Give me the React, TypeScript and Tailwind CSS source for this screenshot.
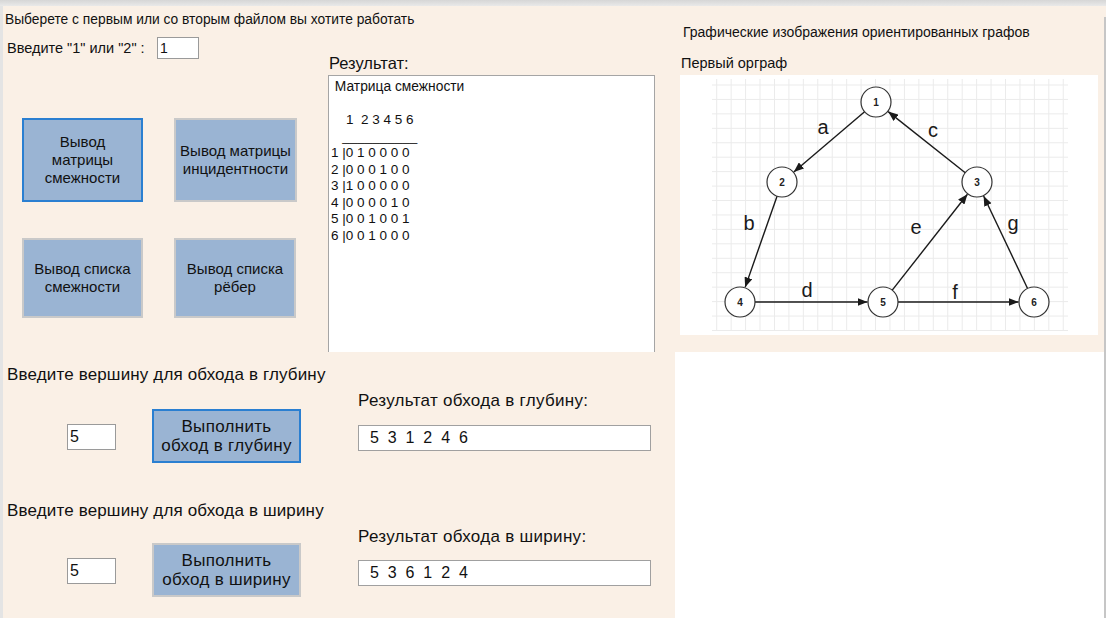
import React from "react";

const nodes: Record<string, [number, number]> = {
  "1": [196, 27],
  "2": [102, 107],
  "3": [297, 107],
  "4": [60, 227],
  "5": [203, 227],
  "6": [354, 227],
};

const edges: [string, string][] = [
  ["1", "2"],
  ["2", "4"],
  ["3", "1"],
  ["4", "5"],
  ["5", "3"],
  ["5", "6"],
  ["6", "3"],
];

const labels: [string, number, number][] = [
  ["a", 143, 52],
  ["c", 253, 55],
  ["b", 69, 148],
  ["e", 236, 152],
  ["g", 333, 148],
  ["d", 127, 215],
  ["f", 275, 217],
];

const R = 15;

function Graph() {
  const vx = Array.from({ length: 25 }, (_, i) => 36.7 + i * 14.44);
  const hy = Array.from({ length: 18 }, (_, i) => 10 + i * 14.44);
  return (
    <svg width="418" height="260" viewBox="0 0 418 260" className="block bg-white">
      <defs>
        <marker id="arr" markerWidth="10" markerHeight="8" refX="10" refY="4" orient="auto" markerUnits="userSpaceOnUse">
          <path d="M0,0 L10,4 L0,8 z" fill="#1a1a1a" />
        </marker>
      </defs>
      {vx.map((x) => (
        <line key={"v" + x} x1={x} y1={4} x2={x} y2={256} stroke="#ebebeb" strokeWidth="1" />
      ))}
      {hy.map((y) => (
        <line key={"h" + y} x1={32} y1={y} x2={388} y2={y} stroke="#ebebeb" strokeWidth="1" />
      ))}
      {edges.map(([a, b]) => {
        const [x1, y1] = nodes[a];
        const [x2, y2] = nodes[b];
        const dx = x2 - x1;
        const dy = y2 - y1;
        const len = Math.hypot(dx, dy);
        const ux = dx / len;
        const uy = dy / len;
        return (
          <line
            key={a + b}
            x1={x1 + ux * R}
            y1={y1 + uy * R}
            x2={x2 - ux * (R + 0.5)}
            y2={y2 - uy * (R + 0.5)}
            stroke="#1a1a1a"
            strokeWidth="1.4"
            markerEnd="url(#arr)"
          />
        );
      })}
      {Object.entries(nodes).map(([k, [x, y]]) => (
        <g key={k}>
          <circle cx={x} cy={y} r={R} fill="white" stroke="#333" strokeWidth="1.2" />
          <text x={x} y={y + 0.5} textAnchor="middle" dominantBaseline="central" fontSize="10" fontWeight="600" fill="#222" fontFamily="Liberation Sans, Arial, sans-serif">
            {k}
          </text>
        </g>
      ))}
      {labels.map(([t, x, y]) => (
        <text key={t} x={x} y={y} textAnchor="middle" dominantBaseline="central" fontSize="20" fill="#1a1a1a" fontFamily="Liberation Sans, Arial, sans-serif">
          {t}
        </text>
      ))}
    </svg>
  );
}

function Btn({ children, focused, className }: { children: React.ReactNode; focused?: boolean; className: string }) {
  return (
    <button
      className={`flex items-center justify-center text-center bg-[#9ab4d3] text-[#111] border-2 ${
        focused ? "border-[#2a7fd1]" : "border-[#c9c9c9]"
      } ${className}`}
    >
      {children}
    </button>
  );
}

const matrix = [
  " Матрица смежности",
  "",
  "    1  2 3 4 5 6",
  "   __________",
  "1 |0 1 0 0 0 0",
  "2 |0 0 0 1 0 0",
  "3 |1 0 0 0 0 0",
  "4 |0 0 0 0 1 0",
  "5 |0 0 1 0 0 1",
  "6 |0 0 1 0 0 0",
];

export default function App() {
  return (
    <div className="w-[1106px] h-[618px] flex flex-col overflow-hidden font-['Liberation_Sans',Arial,sans-serif] text-[#111]">
      <div className="h-[6px] bg-gradient-to-b from-[#d6d6d6] to-[#e9e9e9]" />
      <div className="flex-1 flex">
        <div className="w-[3px] bg-[#e4e4e4]" />
        {/* left panel */}
        <div className="w-[672px] bg-[#faf0e6] flex flex-col">
          <div className="pt-[6px] pl-[2px] text-[13.8px] leading-[16px]">
            Выберете с первым или со вторым файлом вы хотите работать
          </div>
          <div className="flex">
            <div className="w-[325px] flex flex-col">
              <div className="flex items-center mt-[9px]">
                <span className="w-[154px] pl-[4px] text-[14.5px] leading-[22px]">Введите "1" или "2" :</span>
                <div className="w-[42px] h-[22px] bg-white border border-[#9a9a9a] pl-[2px] text-[14px] leading-[20px]">1</div>
              </div>
              <div className="grid grid-cols-[121px_123px] grid-rows-[84px_80px] gap-x-[31px] gap-y-[36px] pl-[19px] mt-[59px] text-[15px] leading-[18px]">
                <Btn focused className="w-[121px] h-[84px]">
                  Вывод
                  <br />
                  матрицы
                  <br />
                  смежности
                </Btn>
                <Btn className="w-[123px] h-[84px]">
                  Вывод матрицы
                  <br />
                  инцидентности
                </Btn>
                <Btn className="w-[121px] h-[80px]">
                  Вывод списка
                  <br />
                  смежности
                </Btn>
                <Btn className="w-[122px] h-[80px]">
                  Вывод списка
                  <br />
                  рёбер
                </Btn>
              </div>
            </div>
            <div className="flex flex-col">
              <div className="mt-[26px] text-[16.5px] leading-[18px] pl-[1px]">Результат:</div>
              <div className="mt-[3px] w-[327px] h-[277px] bg-white border border-[#a5a5a5] border-b-0 pt-[3px] pl-[2px] text-[13.5px] leading-[16.5px] whitespace-pre">
                {matrix.map((l, i) => (
                  <div key={i} className={`h-[16.5px] ${i === 0 ? "text-[13.8px]" : ""}`}>
                    {l}
                  </div>
                ))}
              </div>
            </div>
          </div>

          {/* traversal */}
          <div className="mt-[14px] pl-[4px] text-[17px] tracking-[0.15px] leading-[18px]">Введите вершину для обхода в глубину</div>
          <div className="flex items-start">
            <div className="ml-[64px] mt-[40px] w-[49px] h-[26px] bg-white border border-[#9a9a9a] pl-[2px] text-[16px] leading-[24px]">5</div>
            <Btn focused className="ml-[36px] mt-[25px] w-[149px] h-[54px] text-[17px] tracking-[0.3px] leading-[19px]">
              Выполнить
              <br />
              обход в глубину
            </Btn>
            <div className="ml-[57px] mt-[8px] flex flex-col">
              <div className="text-[17px] tracking-[0.3px] leading-[18px]">Результат обхода в глубину:</div>
              <div className="mt-[15px] w-[293px] h-[26px] bg-white border border-[#a0a0a0] pl-[11px] text-[16px] leading-[24px] whitespace-pre">
                5  3  1  2  4  6
              </div>
            </div>
          </div>

          <div className="mt-[39px] pl-[4px] text-[17px] tracking-[0.15px] leading-[18px]">Введите вершину для обхода в ширину</div>
          <div className="flex items-start">
            <div className="ml-[64px] mt-[38px] w-[49px] h-[26px] bg-white border border-[#9a9a9a] pl-[2px] text-[16px] leading-[24px]">5</div>
            <Btn className="ml-[36px] mt-[23px] w-[149px] h-[54px] text-[17px] tracking-[0.3px] leading-[19px]">
              Выполнить
              <br />
              обход в ширину
            </Btn>
            <div className="ml-[57px] mt-[8px] flex flex-col">
              <div className="text-[17px] tracking-[0.3px] leading-[18px]">Результат обхода в ширину:</div>
              <div className="mt-[14px] w-[293px] h-[26px] bg-white border border-[#a0a0a0] pl-[11px] text-[16px] leading-[24px] whitespace-pre">
                5  3  6  1  2  4
              </div>
            </div>
          </div>
        </div>

        {/* right panel */}
        <div className="flex-1 flex flex-col">
          <div className="h-[346px] bg-[#faf0e6] flex flex-col">
            <div className="pt-[18px] pl-[8px] text-[14px] leading-[16px]">Графические изображения ориентированных графов</div>
            <div className="mt-[15px] pl-[6px] text-[14.5px] leading-[16px]">Первый орграф</div>
            <div className="mt-[4px] ml-[5px]">
              <Graph />
            </div>
          </div>
          <div className="flex-1 bg-white" />
        </div>
        <div className="w-[2px] flex flex-col">
          <div className="h-[11px] bg-[#faf0e6]" />
          <div className="flex-1 bg-[#c6c6c6]" />
        </div>
      </div>
    </div>
  );
}
